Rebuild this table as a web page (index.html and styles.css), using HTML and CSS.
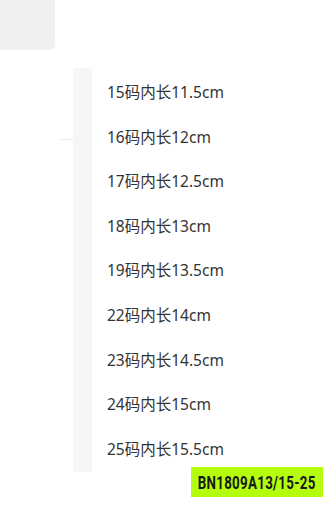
FILE: index.html
```html
<!DOCTYPE html>
<html>
<head>
  <meta charset="UTF-8">
  <title>尺码内长</title>
  <link rel="stylesheet" href="styles.css">
</head>
<body>
  <div class="thumb"></div>

  <div class="panel">
    <div class="rail"></div>
    <ul class="size-list">
      <li>15码内长11.5cm</li>
      <li>16码内长12cm</li>
      <li>17码内长12.5cm</li>
      <li>18码内长13cm</li>
      <li>19码内长13.5cm</li>
      <li>22码内长14cm</li>
      <li>23码内长14.5cm</li>
      <li>24码内长15cm</li>
      <li>25码内长15.5cm</li>
    </ul>
  </div>

  <div class="badge-row">
    <div class="badge"><span class="badge-text">BN1809A13/15-25</span></div>
  </div>
</body>
</html>
```

FILE: styles.css
```css
body {
  margin: 0;
  background-color: white;
  font-family: "Noto Sans", "Noto Sans CJK SC", sans-serif;
  color: #333;
}
.thumb {
  width: 55px;
  height: 50px;
  background-color: #f0f0f0;
  border-bottom-right-radius: 6px;
}
.panel {
  display: flex;
  margin-top: 18px;
  margin-left: 73px;
}
.rail {
  position: relative;
  width: 19px;
  height: 404px;
  background-color: #f6f6f6;
}
.rail::before {
  content: "";
  position: absolute;
  top: 71px;
  left: -13px;
  width: 13px;
  height: 1px;
  background-color: #ececec;
}
.size-list {
  list-style: none;
  margin: 0;
  padding: 2px 0 0 15px;
}
.size-list li {
  height: 44.6px;
  line-height: 44.6px;
  font-size: 15.5px;
  white-space: nowrap;
}
.badge-row {
  display: flex;
  justify-content: flex-end;
  margin-top: -5px;
  padding-right: 13px;
}
.badge {
  display: flex;
  justify-content: center;
  align-items: center;
  width: 132px;
  height: 30px;
  overflow: hidden;
  background-color: #b4fd0c;
}
.badge-text {
  display: inline-block;
  color: #16181a;
  font-family: Roboto, "Liberation Sans", sans-serif;
  font-weight: bold;
  font-size: 18px;
  letter-spacing: 0.4px;
  white-space: nowrap;
  transform: scaleX(0.74);
}
```
